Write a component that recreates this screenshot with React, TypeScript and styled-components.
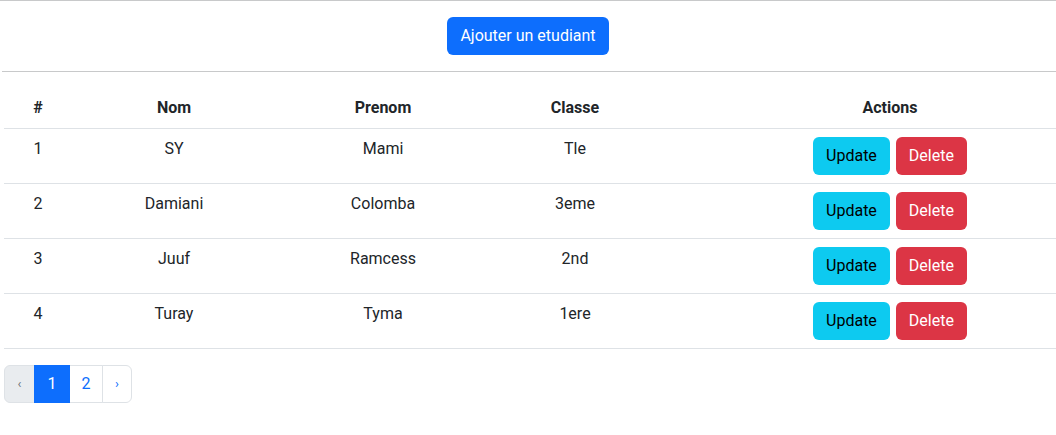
import React from "react";
import styled, { createGlobalStyle } from "styled-components";

const Global = createGlobalStyle`
  html, body { margin: 0; padding: 0; background: #fff; overflow: hidden; }
  body {
    font-family: Roboto, "Noto Sans", sans-serif;
    font-size: 16px;
    line-height: 24px;
    color: #212529;
  }
  * { box-sizing: border-box; }
`;

const Rule = styled.hr<{ $inset?: boolean }>`
  border: 0;
  border-top: 1px solid #c8c9ca;
  margin: 0 0 0 ${(p) => (p.$inset ? "2px" : "0")};
  height: 0;
`;

const Toolbar = styled.div`
  display: flex;
  justify-content: center;
  padding: 16px 0;
`;

const Button = styled.button<{ $variant: "primary" | "info" | "danger" }>`
  font: inherit;
  font-size: 16px;
  line-height: 24px;
  padding: 6px 12px;
  border-radius: 6px;
  border: 1px solid transparent;
  cursor: pointer;
  background: ${(p) =>
    p.$variant === "primary" ? "#0d6efd" : p.$variant === "info" ? "#0dcaf0" : "#dc3545"};
  color: ${(p) => (p.$variant === "info" ? "#000" : "#fff")};
`;

const Body = styled.div`
  padding: 16px 0 0 4px;
  overflow: hidden;
`;

const Table = styled.table`
  width: 1116px;
  border-collapse: collapse;
  margin-bottom: 16px;
`;

const Th = styled.th<{ $w?: number }>`
  font-weight: 700;
  text-align: center;
  padding: 8px;
  border-bottom: 1px solid #dee2e6;
  width: ${(p) => (p.$w ? `${p.$w}px` : "auto")};
`;

const Td = styled.td`
  text-align: center;
  vertical-align: top;
  padding: 8px;
  border-bottom: 1px solid #dee2e6;
`;

const Actions = styled.div`
  display: flex;
  justify-content: center;
  gap: 6px;
`;

const Pager = styled.ul`
  display: flex;
  list-style: none;
  margin: 0;
  padding: 0;
`;

const PageItem = styled.li<{ $active?: boolean; $disabled?: boolean; $w: number; $first?: boolean; $last?: boolean }>`
  width: ${(p) => p.$w}px;
  height: 38px;
  display: flex;
  align-items: center;
  justify-content: center;
  font-size: ${(p) => (p.$first || p.$last ? "13px" : "16px")};
  border: 1px solid ${(p) => (p.$active ? "#0d6efd" : "#dee2e6")};
  margin-left: ${(p) => (p.$first ? "0" : "-1px")};
  background: ${(p) => (p.$active ? "#0d6efd" : p.$disabled ? "#e9ecef" : "#fff")};
  color: ${(p) => (p.$active ? "#fff" : p.$disabled ? "#6c757d" : "#0d6efd")};
  border-radius: ${(p) => (p.$first ? "6px 0 0 6px" : p.$last ? "0 6px 6px 0" : "0")};
  position: relative;
  z-index: ${(p) => (p.$active ? 1 : 0)};
`;

const students = [
  { id: 1, nom: "SY", prenom: "Mami", classe: "Tle" },
  { id: 2, nom: "Damiani", prenom: "Colomba", classe: "3eme" },
  { id: 3, nom: "Juuf", prenom: "Ramcess", classe: "2nd" },
  { id: 4, nom: "Turay", prenom: "Tyma", classe: "1ere" },
];

export default function App() {
  return (
    <>
      <Global />
      <Rule />
      <Toolbar>
        <Button $variant="primary">Ajouter un etudiant</Button>
      </Toolbar>
      <Rule $inset />
      <Body>
        <Table>
          <thead>
            <tr>
              <Th $w={68}>#</Th>
              <Th $w={204}>Nom</Th>
              <Th $w={214}>Prenom</Th>
              <Th $w={170}>Classe</Th>
              <Th>Actions</Th>
            </tr>
          </thead>
          <tbody>
            {students.map((s) => (
              <tr key={s.id}>
                <Td>{s.id}</Td>
                <Td>{s.nom}</Td>
                <Td>{s.prenom}</Td>
                <Td>{s.classe}</Td>
                <Td>
                  <Actions>
                    <Button $variant="info">Update</Button>
                    <Button $variant="danger">Delete</Button>
                  </Actions>
                </Td>
              </tr>
            ))}
          </tbody>
        </Table>
        <Pager>
          <PageItem $first $disabled $w={31}>‹</PageItem>
          <PageItem $active $w={36}>1</PageItem>
          <PageItem $w={34}>2</PageItem>
          <PageItem $last $w={30}>›</PageItem>
        </Pager>
      </Body>
    </>
  );
}
